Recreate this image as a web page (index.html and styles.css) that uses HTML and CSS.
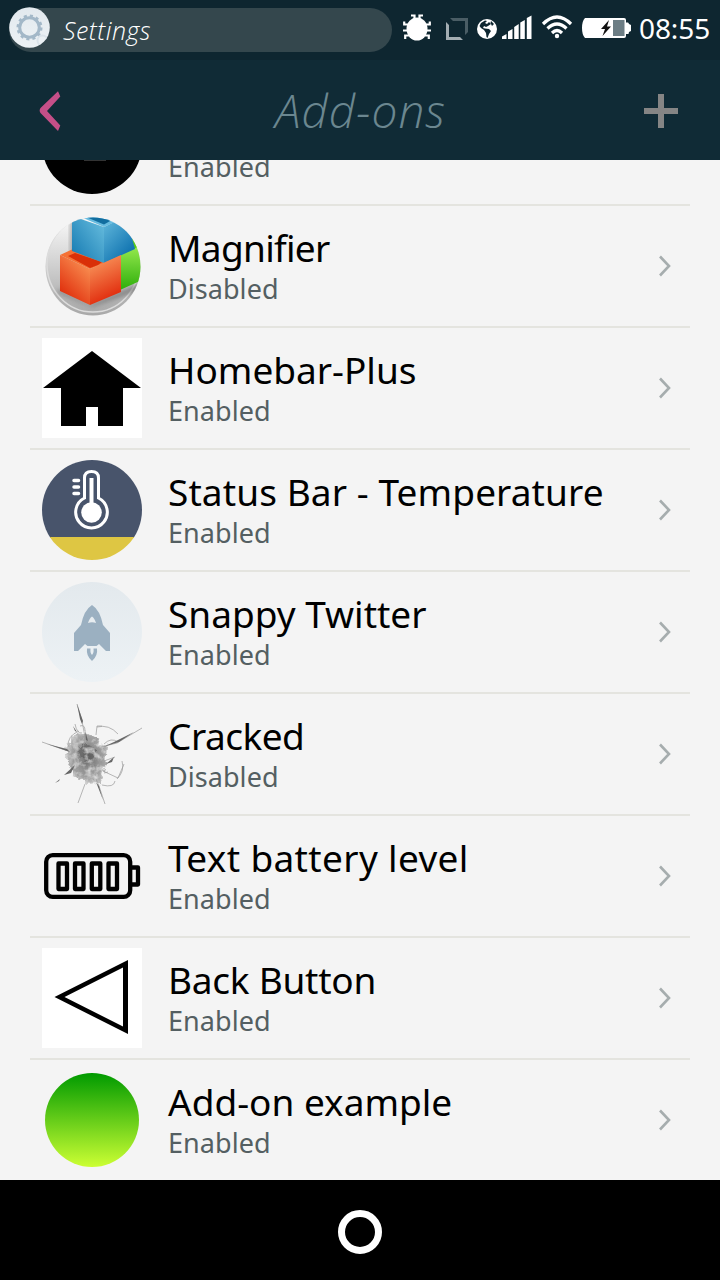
FILE: index.html
```html
<!DOCTYPE html>
<html lang="en">
<head>
<meta charset="utf-8">
<title>Add-ons</title>
<link rel="stylesheet" href="styles.css">
</head>
<body>
<div class="screen">
  <div class="statusbar">
    <div class="pill">
      <svg class="gear" width="42" height="42" viewBox="0 0 42 42">
        <defs><linearGradient id="gearbg" x1="0" y1="0" x2="0" y2="1"><stop offset="0" stop-color="#e2e9ee"/><stop offset="1" stop-color="#edf2f5"/></linearGradient><clipPath id="gearClip"><circle cx="20.5" cy="20.5" r="20.3"/></clipPath></defs>
        <circle cx="20.5" cy="20.5" r="20.3" fill="url(#gearbg)"/>
        <circle cx="20.5" cy="20.5" r="9.8" fill="none" stroke="#a3b8c8" stroke-width="3"/>
        <circle cx="20.5" cy="20.5" r="11.8" fill="none" stroke="#a3b8c8" stroke-width="2.4" stroke-dasharray="3.1 3.08"/>
        <circle cx="33.5" cy="33.500" r="5" fill="none" stroke="#dae3ea" stroke-width="2" clip-path="url(#gearClip)"/>
      </svg>
      <span class="app">Settings</span>
    </div>
    <svg class="bug" width="28" height="28" viewBox="0 0 28 28">
      <ellipse cx="14" cy="15" rx="10.500" ry="11.500" fill="#fff"/>
      <path d="M8 1.500H11.500V5M20 1.500H16.500V5M1.200 7.500V10.500H6M26.800 7.500V10.500H22M0 16.500H28M2.200 25V21.500H6M25.800 25V21.500H22" fill="none" stroke="#fff" stroke-width="2.200"/>
    </svg>
    <svg class="resize" width="22" height="22" viewBox="0 0 22 22">
      <path d="M4 0H22V14L19 17V3H7Z" fill="#4a5d65"/>
      <path d="M0 4L3 7V19H14L17 22H0Z" fill="#a3adb2"/>
    </svg>
    <svg class="globe" width="20" height="20" viewBox="0 0 20 20">
      <circle cx="10" cy="10" r="10" fill="#fff"/>
      <path d="M4 4L8 1.500L10 2L8 4L10 5L12 3L14 5L11 7L9 8L7 7L6 9L8 9.500L12 10L14 12L12 15L10.500 19L9.500 18L9 14L7 11L4 9L2.500 7Z" fill="#0e2630"/>
      <path d="M14 2L17 5L15 7L13.500 4Z" fill="#0e2630"/>
    </svg>
    <svg class="signal" width="30" height="25" viewBox="0 0 30 25">
      <path d="M0 24V21.500L4.500 19V24ZM6 24V16.500L10.500 14V24ZM12.200 24V12L16.700 9V24ZM18.300 24V7.500L22.800 5V24ZM24.800 24V3L29.500 .5V24Z" fill="#fff"/>
    </svg>
    <svg class="wifi" width="32" height="24" viewBox="0 0 32 24">
      <path d="M2 9Q16 -5 30 9M6.500 13.500Q16 4.500 25.500 13.500M11 18Q16 13 21 18" fill="none" stroke="#fff" stroke-width="3.200"/>
      <circle cx="16" cy="21" r="2.200" fill="#fff"/>
    </svg>
    <svg class="batt" width="49" height="20" viewBox="0 0 49 20">
      <path d="M3 0H42Q44 0 44 2V4.500H46Q46.500 4.500 47 6L49 7V13L47 14L46.500 16H44V18Q44 20 42 20H3Q0 17 0 10Q0 3 3 0Z" fill="#fff"/>
      <rect x="31" y="2" width="11.500" height="16" fill="#6c7d84"/>
      <path d="M27 2L19 11H23L20.500 18L29 8.500H25Z" fill="#111"/>
    </svg>
    <span class="clock">08:55</span>
  </div>

  <header class="header">
    <svg width="22" height="40" viewBox="0 0 22 40"><path d="M19 .3L1.500 17Q-.2 19.500 1.500 22L19 40L21.300 34.500L8 20L21.300 5.500Z" fill="#c54f88"/></svg>
    <h1 class="title">Add-ons</h1>
    <svg width="34" height="34" viewBox="0 0 34 34"><path d="M14 0H20V14H34V20H20V34H14V20H0V14H14Z" fill="#858585"/></svg>
  </header>

  <main class="list">
    <div class="row">
      <svg class="icon" viewBox="0 0 100 100"><circle cx="50" cy="50" r="50" fill="#000"/><rect x="42" y="64" width="22" height="3" fill="#333"/></svg>
      <div class="text"><div class="name">&nbsp;</div><div class="state">Enabled</div></div>
      <svg class="chev" viewBox="0 0 14 22"><path d="M2 1.500L11 11L2 20.500"/></svg>
    </div>
    <div class="row">
      <svg class="icon" viewBox="0 0 100 100">
        <defs>
          <linearGradient id="disc" x1="0" y1="0" x2="0" y2="1"><stop offset="0" stop-color="#fbfbfb"/><stop offset=".8" stop-color="#b5b5b5"/><stop offset="1" stop-color="#a8a8a8"/></linearGradient>
          <linearGradient id="blueL" x1="1" y1="0" x2="0" y2="1"><stop offset="0" stop-color="#6bc0e0"/><stop offset="1" stop-color="#1177b0"/></linearGradient>
          <linearGradient id="blueR" x1="0" y1="0" x2=".7" y2="1"><stop offset="0" stop-color="#66bcde"/><stop offset="1" stop-color="#0a6ead"/></linearGradient>
          <linearGradient id="redL" x1=".8" y1="0" x2=".2" y2="1"><stop offset="0" stop-color="#fb9757"/><stop offset="1" stop-color="#dd2405"/></linearGradient>
          <linearGradient id="redR" x1=".2" y1="0" x2=".5" y2="1"><stop offset="0" stop-color="#fa9c60"/><stop offset="1" stop-color="#df2407"/></linearGradient>
          <linearGradient id="green" x1="0" y1="0" x2="0" y2="1"><stop offset="0" stop-color="#a0ef55"/><stop offset="1" stop-color="#2eae0b"/></linearGradient>
          <clipPath id="discClip"><ellipse cx="51" cy="50.500" rx="47.500" ry="49"/></clipPath>
          <filter id="soft"><feGaussianBlur stdDeviation="2"/></filter>
        </defs>
        <g clip-path="url(#discClip)">
          <rect width="100" height="100" fill="url(#disc)"/>
          <ellipse cx="51" cy="48" rx="46" ry="48" fill="none" stroke="#dcdcdc" stroke-width="1.500"/>
          <path d="M16 73L48 89L98 67V74L50 91L16 77Z" fill="#555" opacity=".5" filter="url(#soft)"/>
          <path d="M28 5V36L40 40V3Z" fill="#555" opacity=".4" filter="url(#soft)"/>
          <path d="M78 36L100 26V64L78 74Z" fill="url(#green)"/>
          <path d="M90 22L100 20V29L91 33Z" fill="#55cb18"/>
          <path d="M18 39L31 33L60 43L80 37L78 41L48 53Z" fill="#f57135"/>
          <path d="M26 40L33 37L60 46L56 49L48 52Z" fill="#d93008"/>
          <path d="M30 0L62 11V47L30 35Z" fill="url(#blueL)"/>
          <path d="M62 11L84 0L93 33L62 47Z" fill="url(#blueR)"/>
          <path d="M32 -2H90L62 11Z" fill="#68bce0"/><path d="M44 1H75L62 8.500Z" fill="#126ea0"/>
          <path d="M18 39L48 53V89L18 75Z" fill="url(#redL)"/>
          <path d="M48 53L79 39V76L48 89Z" fill="url(#redR)"/>
        </g>
      </svg>
      <div class="text"><div class="name magnifier">Magnifier</div><div class="state">Disabled</div></div>
      <svg class="chev" viewBox="0 0 14 22"><path d="M2 1.500L11 11L2 20.500"/></svg>
    </div>
    <div class="row">
      <svg class="icon" viewBox="0 0 100 100"><rect width="100" height="100" fill="#fff"/><path d="M50 13L99 50H81V88H56V69H44V88H19V50H1Z"/></svg>
      <div class="text"><div class="name">Homebar-Plus</div><div class="state">Enabled</div></div>
      <svg class="chev" viewBox="0 0 14 22"><path d="M2 1.500L11 11L2 20.500"/></svg>
    </div>
    <div class="row">
      <svg class="icon" viewBox="0 0 100 100">
        <defs><clipPath id="thermo"><circle cx="50" cy="50" r="50"/></clipPath></defs>
        <g clip-path="url(#thermo)"><rect width="100" height="78" fill="#48546b"/><rect y="77" width="100" height="23" fill="#dec643"/></g>
        <path d="M42.500 38V18Q42.500 11.500 49.500 11.500Q56.500 11.500 56.500 18V38A15.800 15.800 0 1 1 42.500 38Z" fill="none" stroke="#fff" stroke-width="3"/>
        <circle cx="49.500" cy="52.500" r="10.300" fill="#fff"/><path d="M49.500 18V46" stroke="#fff" stroke-width="4"/>
        <path d="M32 20.500H36.500M32 27H36.500M32 33.500H36.500" stroke="#fff" stroke-width="3.500" stroke-linecap="round"/>
      </svg>
      <div class="text"><div class="name temperature">Status Bar - Temperature</div><div class="state">Enabled</div></div>
      <svg class="chev" viewBox="0 0 14 22"><path d="M2 1.500L11 11L2 20.500"/></svg>
    </div>
    <div class="row">
      <svg class="icon" viewBox="0 0 100 100">
        <defs><linearGradient id="sky" x1="0" y1="0" x2="0" y2="1"><stop offset="0" stop-color="#e3e9ed"/><stop offset="1" stop-color="#edf2f5"/></linearGradient></defs>
        <circle cx="50" cy="50" r="50" fill="url(#sky)"/>
        <path d="M50 23Q58 28 61 43L68 51V69H64L57 62L54.500 64H45.500L43 62L36 69H32V51L39 43Q42 28 50 23ZM50 34.500Q47.500 36 46 41Q50 39.500 54 41Q52.500 36 50 34.500Z" fill="#9bb0c1" fill-rule="evenodd"/>
        <path d="M45 66.500H48.500Q48 71 50 73Q52 71 51.500 66.500H55Q56 74 50 79Q44 74 45 66.500Z" fill="#9bb0c1"/>
      </svg>
      <div class="text"><div class="name">Snappy Twitter</div><div class="state">Enabled</div></div>
      <svg class="chev" viewBox="0 0 14 22"><path d="M2 1.500L11 11L2 20.500"/></svg>
    </div>
    <div class="row">
      <svg class="icon" viewBox="0 0 100 100">
        <defs>
          <radialGradient id="hole"><stop offset="0" stop-color="#6c6c6c"/><stop offset=".45" stop-color="#8f8f8f"/><stop offset=".85" stop-color="#a6a6a6"/><stop offset="1" stop-color="#bcbcbc"/></radialGradient>
          <filter id="shatter" x="-20%" y="-20%" width="140%" height="140%">
            <feTurbulence type="fractalNoise" baseFrequency=".16" numOctaves="3" seed="8" result="n"/>
            <feDisplacementMap in="SourceGraphic" in2="n" scale="9" xChannelSelector="R" yChannelSelector="G" result="d"/>
            <feColorMatrix in="n" type="matrix" values="0 0 0 0 .85 0 0 0 0 .85 0 0 0 0 .85 1.600 0 0 0 -.7" result="spots"/>
            <feComposite in="spots" in2="d" operator="in" result="s"/>
            <feMerge><feMergeNode in="d"/><feMergeNode in="s"/></feMerge>
          </filter>
        </defs>
        <path d="M24 45Q26 33 40 27L54 34L65 41L63 64L57 79L44 80L34 73L26 60Z" fill="url(#hole)" filter="url(#shatter)"/>
        <path d="M34 45L41 41L51 44L53 51L47 57L37 53Z" fill="#555" opacity=".55" filter="url(#shatter)"/>
        <g fill="none" stroke="#999" stroke-width=".7">
          <path d="M26 43Q25 32 37 27M55 23Q67 20 76 30M80 57Q83 67 75 75M73 77Q72 84 60 81M33 20Q35 30 40 29M43 27Q43 20 38 22M62 57L73 53M61 67L76 74L82 60M54 31L55 22H60M62 69L66 68M36 99L43 80M62 40Q69 33 76 38"/>
          <path d="M35 0L40 17L43 33M0 38L26 47M100 24L75 39L59 43M63 100L57 82L54 75"/>
        </g>
        <g fill="#666">
          <path d="M35 0L41 17L40 20L38 15ZM5 40L25 45L28 48ZM92 28L77 38L61 43L72 38ZM61 96L54 78L57 82ZM13 79L18 75L17 77ZM22 71L33 61L29 69ZM64 60L72 53L70 58ZM43 26L46 37L44 36ZM31 22L35 28L33 27Z"/>
        </g>
      </svg>
      <div class="text"><div class="name cracked">Cracked</div><div class="state">Disabled</div></div>
      <svg class="chev" viewBox="0 0 14 22"><path d="M2 1.500L11 11L2 20.500"/></svg>
    </div>
    <div class="row">
      <svg class="icon" viewBox="0 0 100 100"><g fill="none" stroke="#000" stroke-width="4.300" stroke-linejoin="round"><rect x="4.200" y="29.200" width="84" height="41.600" rx="6.500"/><path d="M89 41.500H96V58.500H89"/><rect x="16.500" y="37.500" width="8.500" height="25.500"/><rect x="33" y="37.500" width="8.500" height="25.500"/><rect x="49.800" y="37.500" width="8.500" height="25.500"/><rect x="66.500" y="37.500" width="8.500" height="25.500"/></g></svg>
      <div class="text"><div class="name battery">Text battery level</div><div class="state">Enabled</div></div>
      <svg class="chev" viewBox="0 0 14 22"><path d="M2 1.500L11 11L2 20.500"/></svg>
    </div>
    <div class="row">
      <svg class="icon" viewBox="0 0 100 100"><rect width="100" height="100" fill="#fff"/><path d="M12.500 49L86 12V86ZM22.500 49L81 78.500V19.500Z" fill-rule="evenodd"/></svg>
      <div class="text"><div class="name back">Back Button</div><div class="state">Enabled</div></div>
      <svg class="chev" viewBox="0 0 14 22"><path d="M2 1.500L11 11L2 20.500"/></svg>
    </div>
    <div class="row">
      <svg class="icon" viewBox="0 0 100 100"><defs><linearGradient id="lime" x1="0" y1="0" x2="0" y2="1"><stop offset="0" stop-color="#009a00"/><stop offset="1" stop-color="#ccff33"/></linearGradient></defs><circle cx="50" cy="50" r="47" fill="url(#lime)"/></svg>
      <div class="text"><div class="name">Add-on example</div><div class="state">Enabled</div></div>
      <svg class="chev" viewBox="0 0 14 22"><path d="M2 1.500L11 11L2 20.500"/></svg>
    </div>
  </main>

  <footer class="navbar"><div class="home"></div></footer>
</div>
</body>
</html>
```
FILE: styles.css
```css
* { box-sizing: border-box; }
body { margin: 0; font-family: "Noto Sans", "Open Sans", sans-serif; background: #000; }
svg { display: block; flex: none; }
.screen { width: 720px; height: 1280px; display: flex; flex-direction: column; overflow: hidden; }

.statusbar { height: 60px; flex: none; background: #0e2630; display: flex; align-items: flex-start; padding-left: 9px; }
.pill { width: 383px; height: 44px; margin-top: 8px; border-radius: 22px; background: #34474d; display: flex; align-items: center; flex: none; }
.gear { margin-top: -5px; }
.app { margin-left: 12px; font-family: "Open Sans", sans-serif; font-style: italic; font-weight: 300; font-size: 25px; letter-spacing: .5px; line-height: 42px; color: #fff; white-space: nowrap; }
.bug { margin: 14px 0 0 11px; }
.resize { margin: 18px 0 0 15px; }
.globe { margin: 19px 0 0 9px; }
.signal { margin: 15px 0 0 5px; }
.wifi { margin: 15px 0 0 9px; }
.batt { margin: 18px 0 0 9px; }
.clock { margin-left: 8px; font-size: 28px; letter-spacing: -.1px; line-height: 56px; color: #fff; white-space: nowrap; }

.header { height: 100px; flex: none; background: #102b36; display: flex; align-items: center; justify-content: space-between; padding: 2px 42px 0 39px; }
.title { margin: 0 0 2px 16px; font-family: "Open Sans", sans-serif; font-style: italic; font-weight: 300; font-size: 46px; letter-spacing: 1px; line-height: 60px; color: #6b8790; white-space: nowrap; }

.list { flex: 1; min-height: 0; overflow: hidden; background: #f4f4f4; display: flex; flex-direction: column; justify-content: flex-end; padding: 0 30px; }
.row { height: 122px; flex: none; display: flex; align-items: center; padding: 0 18px 0 12px; border-bottom: 2px solid #e4e4df; }
.row:last-child { height: 120px; border-bottom: 0; }
.icon { width: 100px; height: 100px; }
.text { flex: 1; margin-left: 26px; padding-top: 3px; white-space: nowrap; }
.name { font-size: 37px; line-height: 41px; height: 42px; color: #000; }
.magnifier { letter-spacing: -.7px; }
.temperature { letter-spacing: .1px; }
.cracked { letter-spacing: -.5px; }
.battery { letter-spacing: .35px; }
.back { letter-spacing: -.25px; }
.state { font-size: 27px; letter-spacing: .05px; line-height: 39px; color: #545f62; }
.chev { width: 14px; height: 22px; }
.chev path { fill: none; stroke: #a6adae; stroke-width: 2.6; }

.navbar { height: 100px; flex: none; background: #000; display: flex; justify-content: center; padding-top: 30px; }
.home { width: 44px; height: 44px; border: 7px solid #fff; border-radius: 50%; }
```
